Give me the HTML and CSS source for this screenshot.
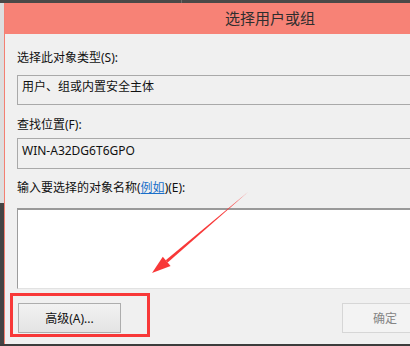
FILE: index.html
```html
<!DOCTYPE html>
<html lang="zh-CN">
<head>
    <meta charset="UTF-8">
    <title>选择用户或组</title>
    <link rel="stylesheet" href="styles.css">
</head>
<body>
    <div class="screen">
        <div class="top-strip">
            <div class="top-left"></div>
        </div>
        <div class="row">
            <div class="side"></div>
            <div class="dialog">
                <div class="title-bar">选择用户或组</div>
                <div class="content">
                    <div class="label first">选择此对象类型(S):</div>
                    <div class="field">用户、组或内置安全主体</div>

                    <div class="label second">查找位置(F):</div>
                    <div class="field tall">WIN-A32DG6T6GPO</div>

                    <div class="label third">输入要选择的对象名称(<a href="#">例如</a>)(E):</div>
                    <div class="names"></div>

                    <div class="buttons">
                        <button type="button" class="btn">高级(A)...</button>
                        <button type="button" class="btn ok" disabled>确定</button>
                    </div>
                </div>
            </div>
        </div>
        <div class="bottom-strip"></div>

        <!-- annotation: arrow + box -->
        <svg class="marks" width="410" height="346" viewBox="0 0 410 346">
            <polygon points="248,192 167.7,262.4 165.7,260.2" fill="#f83838"/>
            <polygon points="152,273 170.6,265.9 162.8,256.7" fill="#f83838"/>
            <rect x="11.5" y="294.5" width="137" height="41" fill="none" stroke="#f83838" stroke-width="3"/>
        </svg>
    </div>
</body>
</html>
```

FILE: styles.css
```css
* {
    margin: 0;
    padding: 0;
    box-sizing: border-box;
}

body {
    width: 410px;
    height: 346px;
    overflow: hidden;
    background-color: #444;
    font-family: "Noto Sans", "Noto Sans CJK SC", sans-serif;
    font-size: 12px;
    color: #111;
}

.screen {
    position: relative;
    width: 410px;
    height: 346px;
    display: flex;
    flex-direction: column;
}

/* Fond d'écran autour */
.top-strip {
    height: 3px;
    background-color: #4b4948;
}

.top-left {
    width: 182px;
    height: 3px;
    border-right: 1px solid #6e6c6a;
}

.row {
    display: flex;
    height: 341px;
}

.side {
    width: 4px;
    background: linear-gradient(#dedede 0, #dedede 200px, #444 200px);
}

.bottom-strip {
    height: 2px;
    background-color: #3c3c3c;
}

/* Boîte de dialogue */
.dialog {
    flex: 1;
    background-color: #f0f0f0;
    border-left: 1px solid #f37f72;
    overflow: hidden;
}

.title-bar {
    height: 31px;
    line-height: 31px;
    background-color: #f78276;
    color: #2e2e2e;
    font-size: 15px;
    padding-left: 220px;
    white-space: nowrap;
}

.content {
    padding-left: 12px;
}

.label {
    line-height: 16px;
    white-space: nowrap;
}

.label.first {
    margin-top: 16px;
    margin-bottom: 9px;
}

.label.second {
    margin-top: 12px;
    margin-bottom: 5px;
}

.label.third {
    margin-top: 11px;
    margin-bottom: 12px;
}

.label a {
    color: #1a6fc9;
    text-decoration: underline;
}

.field {
    width: 420px;
    height: 30px;
    border: 1px solid #a9a9a9;
    background-color: #f0f0f0;
    padding: 3px 4px;
    line-height: 16px;
    white-space: nowrap;
}

.field.tall {
    height: 31px;
    padding-top: 4px;
}

.names {
    width: 420px;
    height: 81px;
    background-color: #fff;
    border-top: 2px solid #999;
    border-left: 1px solid #9c9c9c;
    border-bottom: 1px solid #e2e2e2;
}

.buttons {
    display: flex;
    margin-top: 14px;
}

.btn {
    flex-shrink: 0;
    width: 103px;
    height: 30px;
    margin-left: 1px;
    border: 1px solid #adadad;
    background: linear-gradient(#f2f2f2, #e4e4e4);
    font-family: "Noto Sans", "Noto Sans CJK SC", sans-serif;
    font-size: 12px;
    color: #111;
}

.btn.ok {
    width: 86px;
    margin-left: 221px;
    border-color: #d6d6d6;
    background: #f3f3f3;
    color: #858585;
}

.marks {
    position: absolute;
    left: 0;
    top: 0;
}
```
